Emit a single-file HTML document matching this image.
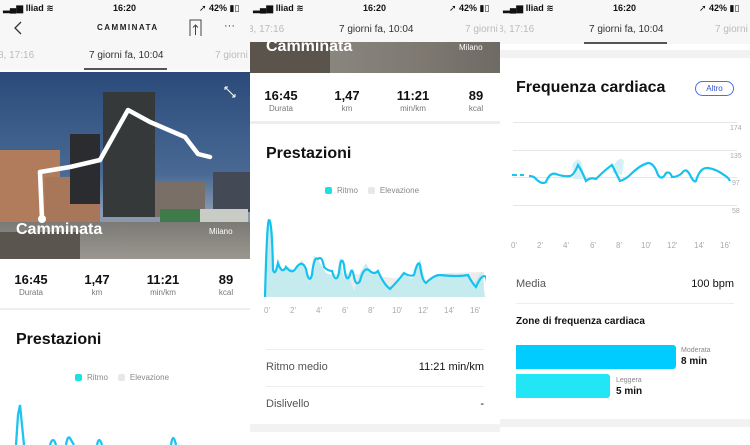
<!DOCTYPE html>
<html><head><meta charset="utf-8">
<style>
*{margin:0;padding:0;box-sizing:border-box}
body{width:750px;height:445px;overflow:hidden;background:#fff;font-family:"Liberation Sans","DejaVu Sans",sans-serif;position:relative;color:#111}
.p{position:absolute;top:0;width:250px;height:445px;overflow:hidden;background:#fff}
.a{position:absolute}
.sb{position:absolute;left:0;top:0;width:250px;height:16px;background:#f7f7f7;font-size:9px;font-weight:bold}
.tabs{position:absolute;left:0;width:250px;height:28px;background:#f7f7f7;font-size:10px;color:#333}
.tabs span{position:absolute;top:8px}
.g{color:#bbb}
.ul{position:absolute;height:2px;background:#555;width:83px;left:84px;bottom:0}
.stat{position:absolute;text-align:center;width:60px}
.stat b{display:block;font-size:13px;color:#111}
.stat i{display:block;font-style:normal;font-size:8px;color:#777;margin-top:1px}
.h{font-weight:bold;font-size:16px;position:absolute;left:16px}
.lg{position:absolute;font-size:8px;color:#888}
.dot{display:inline-block;width:7px;height:7px;border-radius:2px;vertical-align:-1px;margin-right:5px}
.xl{position:absolute;font-size:8px;color:#aaa}
</style></head><body>

<!-- PANEL 1 -->
<div class="p" style="left:0">
 <div class="sb"><span class="a" style="left:3px;top:3px">▂▄▆ Iliad ≋</span><span class="a" style="left:113px;top:3px">16:20</span><span class="a" style="left:199px;top:3px">➚ 42% ▮▯</span></div>
 <div class="a" style="left:0;top:16px;width:250px;height:26px;background:#f7f7f7"></div>
 <svg class="a" style="left:12px;top:20px" width="12" height="16"><path d="M9 2 L3 8 L9 14" fill="none" stroke="#333" stroke-width="1.3"/></svg>
 <div class="a" style="left:97px;top:23px;font-size:8px;font-weight:bold;letter-spacing:1.5px;color:#222">CAMMINATA</div>
 <svg class="a" style="left:189px;top:19px" width="14" height="18"><path d="M1 17 V1 H12 V17" fill="none" stroke="#444" stroke-width="1"/><path d="M6.5 16 V6 M4 8.5 L6.5 6 L9 8.5" fill="none" stroke="#444" stroke-width="1"/></svg>
 <div class="a" style="left:224px;top:20px;font-size:11px;color:#333">···</div>
 <div class="tabs" style="top:42px"><span class="g" style="left:-2px">8, 17:16</span><span style="left:89px">7 giorni fa, 10:04</span><span class="g" style="left:215px">7 giorni</span><div class="ul"></div></div>
 <div class="a" style="left:0;top:72px;width:250px;height:187px;background:linear-gradient(#2a4a7a,#4a6a95 55%,#8a9bb3 75%,#8c8a85)">
  <div class="a" style="left:0;top:78px;width:60px;height:80px;background:#b07c5c"></div>
  <div class="a" style="left:45px;top:105px;width:55px;height:55px;background:#a8775a"></div>
  <div class="a" style="left:70px;top:62px;width:30px;height:70px;background:#2a2c2f"></div>
  <div class="a" style="left:103px;top:20px;width:52px;height:125px;background:#35393a"></div>
  <div class="a" style="left:213px;top:100px;width:37px;height:40px;background:#444a55"></div>
  <div class="a" style="left:155px;top:110px;width:50px;height:35px;background:#7a6f66"></div>
  <div class="a" style="left:160px;top:137px;width:40px;height:18px;background:#3e7a4a"></div>
  <div class="a" style="left:200px;top:137px;width:48px;height:20px;background:#c8ccc5"></div>
  <div class="a" style="left:0;top:150px;width:250px;height:37px;background:linear-gradient(#7c7a76,#9a968f)"></div>
  <div class="a" style="left:0;top:160px;width:80px;height:27px;background:#5a554e"></div>
  <svg class="a" style="left:0;top:0" width="250" height="187"><path d="M42 147 L40 100 L70 95 L100 88 L128 38 L150 50 L185 65 L198 82 L210 85" fill="none" stroke="#fff" stroke-width="4.5" stroke-linejoin="round" stroke-linecap="round"/><circle cx="42" cy="147" r="4" fill="#fff"/><path d="M225 15 L235 25 M225 15 l0 3 M225 15 l3 0 M235 25 l-3 0 M235 25 l0 -3" stroke="#fff" stroke-width="1"/></svg>
  <div class="a" style="left:16px;top:149px;color:#fff;font-weight:bold;font-size:16px">Camminata</div>
  <div class="a" style="left:209px;top:155px;color:#fff;font-size:8px">Milano</div>
 </div>
 <div class="stat" style="left:1px;top:272px"><b>16:45</b><i>Durata</i></div>
 <div class="stat" style="left:67px;top:272px"><b>1,47</b><i>km</i></div>
 <div class="stat" style="left:133px;top:272px"><b>11:21</b><i>min/km</i></div>
 <div class="stat" style="left:196px;top:272px"><b>89</b><i>kcal</i></div>
 <div class="a" style="left:0;top:308px;width:250px;height:2px;background:#eee"></div>
 <div class="h" style="top:331px">Prestazioni</div>
 <div class="lg" style="left:75px;top:373px"><span class="dot" style="background:#1de0e0"></span>Ritmo<span class="dot" style="background:#e8e8e8;margin-left:10px"></span>Elevazione</div>
 <svg class="a" style="left:0;top:395px" width="250" height="50"><path d="M16 50 L18 20 L20 10 L22 30 L24 50 M50 50 Q53 40 56 50 M66 50 Q68 38 71 45 L74 50 M97 50 Q99 40 102 50 M171 50 Q173 36 176 50" fill="none" stroke="#1ec4ef" stroke-width="2.3"/></svg>
</div>

<!-- PANEL 2 -->
<div class="p" style="left:250px">
 <div class="sb"><span class="a" style="left:3px;top:3px">▂▄▆ Iliad ≋</span><span class="a" style="left:113px;top:3px">16:20</span><span class="a" style="left:199px;top:3px">➚ 42% ▮▯</span></div>
 <div class="tabs" style="top:16px"><span class="g" style="left:-2px">8, 17:16</span><span style="left:89px">7 giorni fa, 10:04</span><span class="g" style="left:215px">7 giorni</span></div>
 <div class="a" style="left:0;top:42px;width:250px;height:31px;background:linear-gradient(90deg,#5e5a52,#8a8680 30%,#7d7870 70%,#6e6a64)">
  <div class="a" style="left:0;top:0;width:80px;height:31px;background:#5a544c"></div>
  <div class="a" style="left:16px;top:-4px;color:#fff;font-weight:bold;font-size:16px">Camminata</div>
  <div class="a" style="left:209px;top:1px;color:#fff;font-size:8px">Milano</div>
 </div>
 <div class="stat" style="left:1px;top:88px"><b>16:45</b><i>Durata</i></div>
 <div class="stat" style="left:67px;top:88px"><b>1,47</b><i>km</i></div>
 <div class="stat" style="left:133px;top:88px"><b>11:21</b><i>min/km</i></div>
 <div class="stat" style="left:196px;top:88px"><b>89</b><i>kcal</i></div>
 <div class="a" style="left:0;top:121px;width:250px;height:3px;background:#eee"></div>
 <div class="h" style="top:145px">Prestazioni</div>
 <div class="lg" style="left:75px;top:186px"><span class="dot" style="background:#1de0e0"></span>Ritmo<span class="dot" style="background:#e8e8e8;margin-left:10px"></span>Elevazione</div>
 <svg class="a" style="left:14px;top:215px" width="222" height="85">
  <path d="M1 82 L4 70 L10 58 L20 60 L40 66 L60 60 L80 58 L120 62 L160 66 L180 58 L220 57 L220 82 Z" fill="#ececec"/>
  <path d="M1 82 L4 4 L7 5 L10 60 L14 48 L20 56 L24 52 L30 55 L38 45 L45 68 L50 40 L56 48 L62 58 L68 60 L72 66 L76 42 L80 64 L84 58 L90 76 L96 58 L102 48 L108 60 L114 54 L122 72 L130 70 L138 58 L148 64 L156 44 L162 70 L172 60 L190 62 L204 62 L210 68 L218 56 L221 82 Z" fill="#c6ebee"/>
  <path d="M1 82 Q3 5 5 5 Q8 5 9 55 Q11 62 14 48 Q18 60 22 52 Q28 60 32 53 Q38 44 42 54 Q45 70 48 60 Q50 40 54 44 Q58 40 60 52 Q64 56 68 56 Q72 70 75 58 Q77 38 80 50 Q82 70 86 60 Q88 50 90 62 Q92 72 96 66 Q100 50 106 56 Q110 60 114 56 Q120 70 126 74 Q134 66 140 58 Q146 62 150 60 Q154 44 156 50 Q158 66 162 68 Q170 60 176 60 Q194 62 204 60 Q208 68 212 72 Q218 58 222 62 Q224 68 223 82" fill="none" stroke="#15c2ef" stroke-width="2.2"/>
 </svg>
 <div class="xl" style="left:14px;top:306px">0'</div><div class="xl" style="left:40px;top:306px">2'</div><div class="xl" style="left:66px;top:306px">4'</div><div class="xl" style="left:92px;top:306px">6'</div><div class="xl" style="left:118px;top:306px">8'</div><div class="xl" style="left:142px;top:306px">10'</div><div class="xl" style="left:168px;top:306px">12'</div><div class="xl" style="left:194px;top:306px">14'</div><div class="xl" style="left:220px;top:306px">16'</div>
 <div class="a" style="left:16px;top:349px;width:218px;height:1px;background:#eee"></div>
 <div class="a" style="left:16px;top:361px;font-size:11px;color:#555">Ritmo medio</div>
 <div class="a" style="right:16px;top:361px;font-size:11px;color:#111">11:21 min/km</div>
 <div class="a" style="left:16px;top:386px;width:218px;height:1px;background:#eee"></div>
 <div class="a" style="left:16px;top:398px;font-size:11px;color:#555">Dislivello</div>
 <div class="a" style="right:16px;top:398px;font-size:11px;color:#111">-</div>
 <div class="a" style="left:0;top:424px;width:250px;height:8px;background:#f2f2f2"></div>
</div>

<!-- PANEL 3 -->
<div class="p" style="left:500px">
 <div class="sb"><span class="a" style="left:3px;top:3px">▂▄▆ Iliad ≋</span><span class="a" style="left:113px;top:3px">16:20</span><span class="a" style="left:199px;top:3px">➚ 42% ▮▯</span></div>
 <div class="tabs" style="top:16px"><span class="g" style="left:-2px">8, 17:16</span><span style="left:89px">7 giorni fa, 10:04</span><span class="g" style="left:215px">7 giorni</span><div class="ul"></div></div>
 <div class="a" style="left:0;top:50px;width:250px;height:8px;background:#f2f2f2"></div>
 <div class="a" style="left:16px;top:79px;font-weight:bold;font-size:16px">Frequenza cardiaca</div>
 <div class="a" style="left:195px;top:81px;width:39px;height:15px;border:1px solid #4a6ef0;border-radius:8px;font-size:8px;color:#3355cc;text-align:center;line-height:13px">Altro</div>
 <div class="a" style="left:13px;top:122px;width:224px;height:1px;background:#e6e6e6"></div>
 <div class="a" style="left:13px;top:150px;width:224px;height:1px;background:#e6e6e6"></div>
 <div class="a" style="left:13px;top:177px;width:224px;height:1px;background:#e6e6e6"></div>
 <div class="a" style="left:13px;top:205px;width:224px;height:1px;background:#e6e6e6"></div>
 <div class="xl" style="left:230px;top:125px;font-size:7px">174</div>
 <div class="xl" style="left:230px;top:153px;font-size:7px">135</div>
 <div class="xl" style="left:232px;top:180px;font-size:7px">97</div>
 <div class="xl" style="left:232px;top:208px;font-size:7px">58</div>
 <svg class="a" style="left:12px;top:155px" width="228" height="40">
  <path d="M0 20 L12 20" stroke="#1ec4ef" stroke-width="2" stroke-dasharray="5,3"/>
  <path d="M60 10 Q66 0 70 8 L72 24 L62 24 Z M102 10 Q108 0 112 6 L110 20 L100 18 Z" fill="#d4f1f8"/>
  <path d="M17 21 Q22 21 24 24 Q30 30 34 27 Q38 17 44 19 Q52 22 58 21 Q62 20 66 10 Q70 16 74 26 Q78 22 84 24 Q94 14 100 10 Q104 18 108 26 Q114 24 118 20 Q128 10 136 8 Q142 8 146 20 Q150 26 154 18 Q158 16 160 22 Q166 22 170 18 Q174 12 178 20 Q182 28 184 26 Q188 12 196 13 Q204 14 212 20 Q216 22 218 26" fill="none" stroke="#15c2ef" stroke-width="2.2"/>
 </svg>
 <div class="xl" style="left:11px;top:241px">0'</div><div class="xl" style="left:37px;top:241px">2'</div><div class="xl" style="left:63px;top:241px">4'</div><div class="xl" style="left:90px;top:241px">6'</div><div class="xl" style="left:116px;top:241px">8'</div><div class="xl" style="left:141px;top:241px">10'</div><div class="xl" style="left:167px;top:241px">12'</div><div class="xl" style="left:194px;top:241px">14'</div><div class="xl" style="left:220px;top:241px">16'</div>
 <div class="a" style="left:16px;top:278px;font-size:11px;color:#555">Media</div>
 <div class="a" style="right:16px;top:278px;font-size:11px;color:#111">100 bpm</div>
 <div class="a" style="left:16px;top:303px;width:218px;height:1px;background:#eee"></div>
 <div class="a" style="left:16px;top:316px;font-size:10px;font-weight:bold">Zone di frequenza cardiaca</div>
 <div class="a" style="left:16px;top:345px;width:160px;height:24px;background:#00ccff;border-radius:0 3px 3px 0"></div>
 <div class="a" style="left:181px;top:347px;font-size:7px;color:#888">Moderata</div>
 <div class="a" style="left:181px;top:356px;font-size:10px;font-weight:bold">8 min</div>
 <div class="a" style="left:16px;top:374px;width:94px;height:24px;background:#22e6f5;border-radius:0 3px 3px 0"></div>
 <div class="a" style="left:116px;top:377px;font-size:7px;color:#888">Leggera</div>
 <div class="a" style="left:116px;top:386px;font-size:10px;font-weight:bold">5 min</div>
 <div class="a" style="left:0;top:419px;width:250px;height:8px;background:#f2f2f2"></div>
</div>
</body></html>
